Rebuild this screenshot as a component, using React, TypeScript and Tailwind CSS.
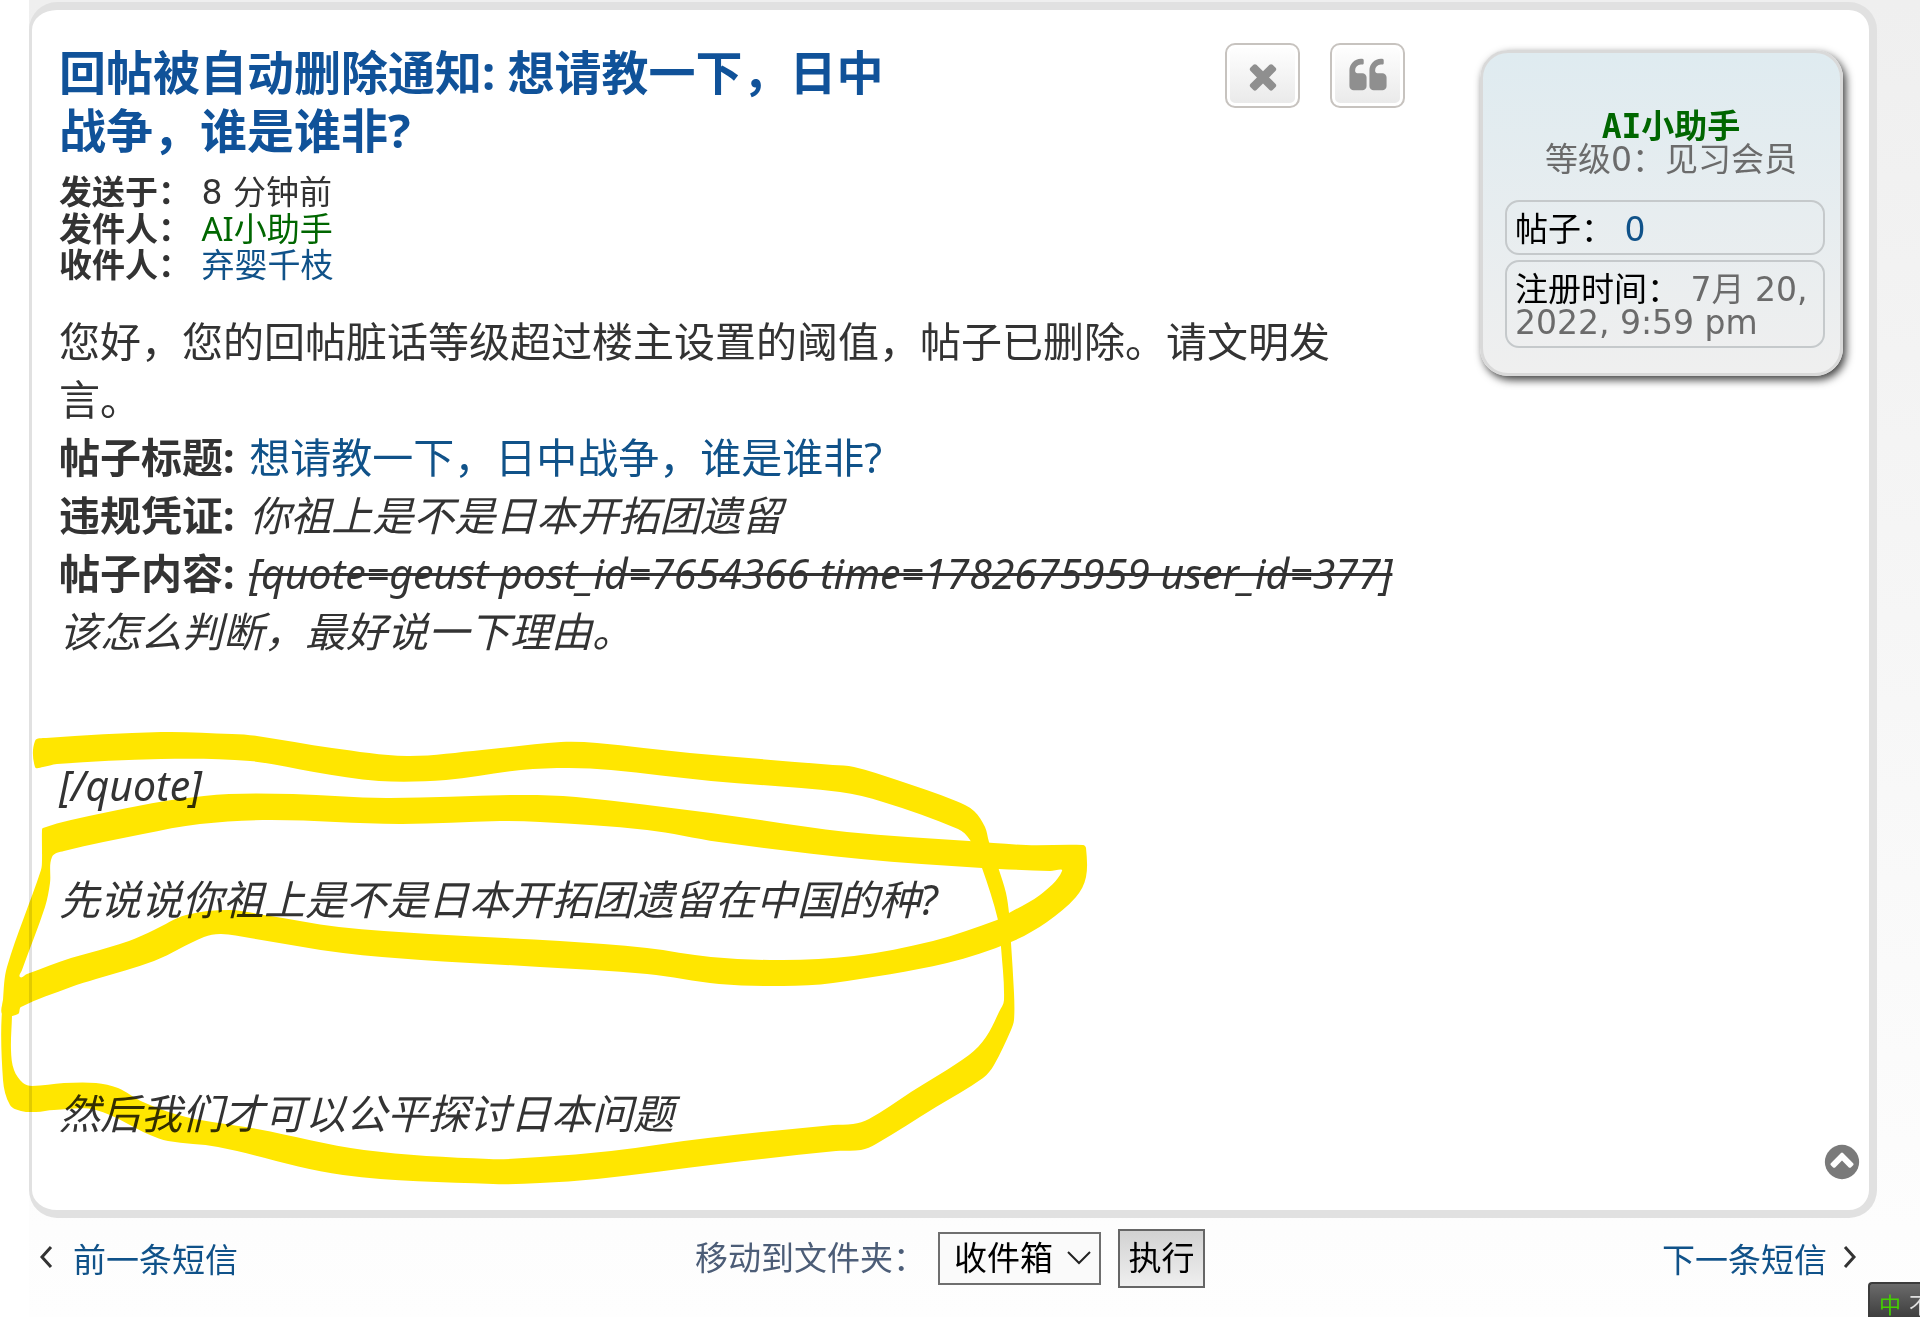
import { ReactNode } from "react";

type Point = [number, number];

// closed smooth curve through the given points
function smooth(pts: Point[]) {
  const n = pts.length;
  let d = `M${pts[0][0]} ${pts[0][1]}`;
  for (let i = 0; i < n; i++) {
    const a = pts[(i - 1 + n) % n];
    const b = pts[i];
    const c = pts[(i + 1) % n];
    const e = pts[(i + 2) % n];
    const len = Math.hypot(c[0] - b[0], c[1] - b[1]);
    const t1 = len / (Math.hypot(c[0] - a[0], c[1] - a[1]) * 3 || 1);
    const t2 = len / (Math.hypot(e[0] - b[0], e[1] - b[1]) * 3 || 1);
    const x1 = b[0] + (c[0] - a[0]) * t1;
    const y1 = b[1] + (c[1] - a[1]) * t1;
    const x2 = c[0] - (e[0] - b[0]) * t2;
    const y2 = c[1] - (e[1] - b[1]) * t2;
    d += `C${x1.toFixed(1)} ${y1.toFixed(1)} ${x2.toFixed(1)} ${y2.toFixed(1)} ${c[0]} ${c[1]}`;
  }
  return d + "Z";
}

const bigLoop: Point[] = [
  [35, 741], [46, 738], [161, 732], [232, 734], [257, 736], [332, 748], [407, 756], [482, 750],
  [561, 742], [597, 743], [690, 753], [833, 765], [854, 767], [897, 780], [956, 801], [974, 811],
  [985, 827], [989, 842], [999, 870], [1006, 893], [1009, 913], [1011, 943], [1014, 993],
  [1014, 1020], [1011, 1030], [994, 1065], [983, 1078], [936, 1107], [876, 1144], [861, 1150],
  [836, 1151], [719, 1164], [597, 1179], [540, 1183], [493, 1184], [343, 1175], [218, 1147],
  [168, 1141], [150, 1135], [96, 1110], [54, 1110], [36, 1112], [21, 1111], [10, 1105],
  [3, 1080], [3, 1000], [12, 1000], [12, 1015], [11, 1050], [14, 1070], [23, 1083], [32, 1086],
  [64, 1083], [96, 1083], [118, 1088], [143, 1102], [186, 1117], [257, 1129], [364, 1150],
  [489, 1159], [540, 1157], [611, 1151], [708, 1138], [833, 1125], [853, 1124], [869, 1119],
  [911, 1092], [969, 1055], [986, 1037], [999, 1012], [1004, 1000], [1001, 947], [998, 920],
  [982, 868], [970, 840], [958, 829], [883, 802], [840, 792], [711, 781], [611, 770], [569, 768],
  [521, 770], [446, 780], [379, 781], [314, 772], [250, 761], [161, 759], [57, 764], [43, 767],
  [35, 767],
];

const smallLoopOuter: Point[] = [
  [42, 830], [43, 828], [71, 820], [143, 805], [179, 799], [229, 794], [293, 794], [386, 798],
  [518, 795], [576, 797], [711, 813], [847, 832], [969, 841], [1026, 845], [1083, 845],
  [1086, 848], [1086, 877], [1076, 897], [1047, 922], [1011, 942], [947, 963], [833, 983],
  [783, 986], [719, 984], [647, 974], [540, 967], [421, 960], [343, 953], [250, 938], [221, 934],
  [204, 937], [154, 961], [96, 979], [71, 987], [21, 1007], [18, 1014], [3, 1015], [3, 1000],
  [7, 967], [41, 870], [42, 860],
];

const smallLoopInner: Point[] = [
  [1062, 871], [1050, 871], [999, 869], [982, 868], [861, 859], [719, 842], [647, 830],
  [540, 822], [500, 821], [400, 824], [271, 820], [200, 824], [143, 834], [64, 851], [52, 857],
  [50, 883], [45, 907], [22, 970], [20, 977], [27, 974], [71, 958], [89, 953], [129, 941],
  [154, 930], [186, 915], [229, 910], [264, 915], [339, 927], [429, 934], [560, 941], [647, 948],
  [711, 957], [783, 960], [854, 956], [933, 941], [997, 920], [1009, 913], [1040, 895],
];

function Marker() {
  return (
    <svg
      className="absolute left-0 top-0 pointer-events-none mix-blend-multiply"
      width="1100"
      height="1200"
      viewBox="0 0 1100 1200"
      fill="#ffe600"
      aria-hidden="true"
    >
      <path d={smooth(bigLoop)} />
      <path d={smooth(smallLoopOuter) + smooth(smallLoopInner)} fillRule="evenodd" />
    </svg>
  );
}

function IconButton({ label, children }: { label: string; children: ReactNode }) {
  return (
    <button
      aria-label={label}
      className="flex h-[65px] w-[75px] items-center justify-center rounded-[10px] border-2 border-[#c7c3bf] bg-linear-to-b from-white to-[#e9e9e9] shadow-[inset_0_0_0_3px_#fff]"
    >
      <svg width="40" height="40" viewBox="0 0 1792 1792" fill="#8f8f8f">
        {children}
      </svg>
    </button>
  );
}

function Profile() {
  return (
    <aside className="mt-10 h-fit w-[363px] shrink-0 rounded-[28px] border-[3px] border-[#d9d9d9] bg-linear-to-b from-[#dfebf0] to-[#efefef] pl-[22px] pr-[15px] pt-[57px] pb-[25px] text-[33px] leading-[33px] text-[#6b6b6b] shadow-[3px_4px_8px_rgba(0,0,0,0.75)]">
      <div className="pl-3 text-center">
        <a href="#" className="font-['DejaVu_Sans_Mono','Noto_Sans_CJK_SC',sans-serif] font-bold text-[#006600]">
          AI小助手
        </a>
        <div>等级0：见习会员</div>
      </div>
      <dl className="mt-6 flex flex-col gap-[5px]">
        <div className="rounded-[14px] border-2 border-[#c5c9cb] px-2 pt-[11px] pb-[7px]">
          <dt className="inline text-black">帖子：</dt>{" "}
          <dd className="inline">
            <a href="#" className="text-[#105289]">0</a>
          </dd>
        </div>
        <div className="rounded-[14px] border-2 border-[#c5c9cb] px-2 pt-[11px] pb-[7px]">
          <dt className="inline text-black">注册时间：</dt>{" "}
          <dd className="inline">7月 20, 2022, 9:59 pm</dd>
        </div>
      </dl>
    </aside>
  );
}

export default function App() {
  return (
    <div className="relative min-h-screen overflow-hidden bg-white pl-[29px] font-['DejaVu_Sans','Noto_Sans_CJK_SC',sans-serif] text-[#333333]">
      <div className="min-h-screen bg-linear-to-b from-[#efefef] to-[#fefefe] pt-[2px] pr-[43px]">
        <main className="relative flex min-h-[1216px] justify-between rounded-[28px] border-8 border-l-[3px] border-[#e1e1e1] bg-white pl-[27px] pr-[26px]">
          <article className="w-[1346px] shrink-0 pt-[33px]">
            <header className="flex items-start justify-between">
              <h3 className="w-[840px] font-['Noto_Sans','Noto_Sans_CJK_SC',sans-serif] text-[47px] leading-[58px] font-bold text-[#105299]">
                <a href="#">回帖被自动删除通知: 想请教一下，日中战争，谁是谁非?</a>
              </h3>
              <div className="flex gap-[30px]">
                <IconButton label="删除">
                  <path d="M1490 1322q0 40-28 68l-136 136q-28 28-68 28t-68-28l-294-294-294 294q-28 28-68 28t-68-28l-136-136q-28-28-28-68t28-68l294-294-294-294q-28-28-28-68t28-68l136-136q28-28 68-28t68 28l294 294 294-294q28-28 68-28t68 28l136 136q28 28 28 68t-28 68l-294 294 294 294q28 28 28 68z" />
                </IconButton>
                <IconButton label="引用">
                  <path d="M832 960v384q0 80-56 136t-136 56h-384q-80 0-136-56t-56-136v-704q0-104 40.500-198.500t109.500-163.500 163.500-109.500 198.500-40.500h64q26 0 45 19t19 45v128q0 26-19 45t-45 19h-64q-106 0-181 75t-75 181v32q0 40 28 68t68 28h224q80 0 136 56t56 136zm896 0v384q0 80-56 136t-136 56h-384q-80 0-136-56t-56-136v-704q0-104 40.500-198.500t109.500-163.500 163.500-109.500 198.500-40.500h64q26 0 45 19t19 45v128q0 26-19 45t-45 19h-64q-106 0-181 75t-75 181v32q0 40 28 68t68 28h224q80 0 136 56t56 136z" />
                </IconButton>
              </div>
            </header>

            <div className="mt-4 text-[33px] leading-[36px]">
              <p>
                <strong>发送于：</strong> 8 分钟前
              </p>
              <p>
                <strong>发件人：</strong>{" "}
                <a href="#" className="font-['Noto_Sans','Noto_Sans_CJK_SC',sans-serif] text-[#006600]">AI小助手</a>
              </p>
              <p>
                <strong>收件人：</strong>{" "}
                <a href="#" className="text-[#105289]">弃婴千枝</a>
              </p>
            </div>

            <div className="mt-7 font-['Noto_Sans','Noto_Sans_CJK_SC',sans-serif] text-[41px] leading-[58px]">
              <p>您好，您的回帖脏话等级超过楼主设置的阈值，帖子已删除。请文明发言。</p>
              <p>
                <strong className="mr-1">帖子标题:</strong>{" "}
                <a href="#" className="text-[#105289]">想请教一下，日中战争，谁是谁非?</a>
              </p>
              <p>
                <strong className="mr-1">违规凭证:</strong> <em>你祖上是不是日本开拓团遗留</em>
              </p>
              <p className="whitespace-nowrap">
                <strong className="mr-1">帖子内容:</strong>{" "}
                <em>
                  <s className="decoration-[3px]">[quote=geust post_id=7654366 time=1782675959 user_id=377]</s>
                </em>
              </p>
              <p className="italic">该怎么判断，最好说一下理由。</p>
              <p className="mt-24 italic">[/quote]</p>
              <p className="mt-14 italic">先说说你祖上是不是日本开拓团遗留在中国的种?</p>
              <p className="mt-[156px] italic">然后我们才可以公平探讨日本问题</p>
            </div>
          </article>

          <Profile />

          <a href="#" aria-label="页首" className="absolute right-[7px] bottom-7">
            <svg width="40" height="40" viewBox="0 0 1792 1792">
              <circle cx="896" cy="896" r="768" fill="#7a7a7a" />
              <path
                fill="#fff"
                d="M1293 1139l102-102q19-19 19-45t-19-45l-454-454q-19-19-45-19t-45 19l-454 454q-19 19-19 45t19 45l102 102q19 19 45 19t45-19l307-307 307 307q19 19 45 19t45-19z"
              />
            </svg>
          </a>
        </main>

        <nav className="flex items-start justify-between pt-[11px] pl-[10px] pr-[20px] text-[33px] leading-[40px]">
          <a href="#" className="mt-3 flex items-start gap-5 text-[#105289]">
            <svg className="mt-1" width="14" height="24" viewBox="0 0 14 24" fill="none" stroke="#333" strokeWidth="3">
              <path d="M12 2L3 12l9 10" />
            </svg>
            前一条短信
          </a>
          <form className="flex items-center">
            <label htmlFor="folder" className="mr-[12px] text-[#4c5d77]">
              移动到文件夹：
            </label>
            <span className="relative flex">
              <select
                id="folder"
                className="h-[53px] w-[163px] appearance-none border-2 border-[#6f6f6f] bg-[#fafafa] pl-[14px] text-[33px] leading-[40px] text-black"
              >
                <option>收件箱</option>
              </select>
              <svg
                className="pointer-events-none absolute top-[19px] right-[10px]"
                width="24"
                height="14"
                viewBox="0 0 24 14"
                fill="none"
                stroke="#222"
                strokeWidth="2"
              >
                <path d="M1 1l11 11L23 1" />
              </svg>
            </span>
            <button
              type="button"
              className="ml-[17px] h-[59px] w-[87px] border-2 border-[#666666] bg-linear-to-b from-[#d2d2d2] to-[#efefef] text-black"
            >
              执行
            </button>
          </form>
          <a href="#" className="mt-3 flex items-start gap-4 text-[#105289]">
            下一条短信
            <svg className="mt-1" width="14" height="24" viewBox="0 0 14 24" fill="none" stroke="#333" strokeWidth="3">
              <path d="M2 2l9 10-9 10" />
            </svg>
          </a>
        </nav>
      </div>

      <Marker />

      {/* input method bar */}
      <div className="absolute right-0 bottom-0 flex h-[35px] w-[52px] gap-2 overflow-hidden rounded-tl-sm border-t-2 border-l-2 border-[#3c3c3c] bg-linear-to-b from-[#6b6b6b] to-[#3f3f3f] pt-[10px] pl-[9px] text-[22px] leading-[24px] whitespace-nowrap">
        <span className="text-[#44d000]">中</span>
        <span className="text-[#e0e0e0]">不</span>
      </div>
    </div>
  );
}
